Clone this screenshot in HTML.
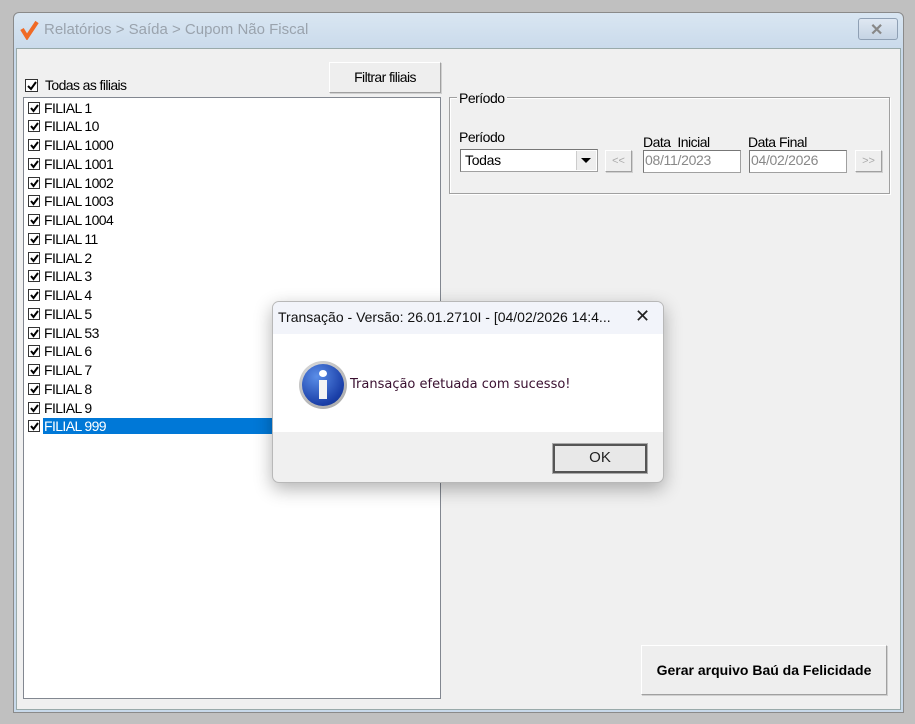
<!DOCTYPE html>
<html><head><meta charset="utf-8"><style>
*{margin:0;padding:0;box-sizing:border-box}
body{width:915px;height:724px;background:#c0c0c0;position:relative;overflow:hidden;font-family:"Liberation Sans",sans-serif;font-size:13px;color:#000}
.a{position:absolute}
.win{left:13px;top:12px;width:891px;height:701px;border:1px solid #8a8a8a;border-radius:6px 6px 0 0;background:linear-gradient(#d9e6f2,#c8d9ea 40px);}
.client{left:16px;top:48px;width:885px;height:662px;background:#f0f0f0;border:1px solid #9aa;}
.cb{position:absolute;width:12px;height:12px;border:1px solid #333;background:#fff}
.cb svg{position:absolute;left:0;top:0}
.row{position:absolute;left:4px;height:19px;width:400px}
.row .cb{left:0;top:3px}
.row span{position:absolute;left:15px;top:1px;font-size:14px;letter-spacing:-0.6px;padding:0 1px}
.btn{position:absolute;background:#eeeeee;border:1px solid #fff;border-right-color:#a0a0a0;border-bottom-color:#a0a0a0;box-shadow:1px 1px 0 #d0d0d0;text-align:center}
.inp{position:absolute;background:#fff;border:1px solid #a0a0a0;border-top-color:#777;border-left-color:#777;font-size:14px;color:#888;padding:1px 0 0 1px;letter-spacing:-0.3px}
</style></head><body>
<div class="a win"></div>
<svg class="a" style="left:20px;top:20px" width="20" height="20"><path d="M2 9 L7 17 L17 2" stroke="#f06a25" stroke-width="4" fill="none"/></svg>
<div class="a" style="left:44px;top:21px;font-size:15px;color:#9aa3ad">Relatórios &gt; Saída &gt; Cupom Não Fiscal</div>
<div class="a" style="left:858px;top:18px;width:40px;height:22px;border:1px solid #8fa0b4;border-radius:3px;background:linear-gradient(#dfe8f2,#c5d4e4)"></div>
<div class="a" style="left:870px;top:20px;font-size:16px;font-weight:bold;color:#888">✕</div>
<div class="a client"></div>
<div class="cb" style="left:25px;top:79px;width:13px;height:13px"><svg width="12" height="12"><path d="M2 6 L5 9 L10 2" stroke="#000" stroke-width="2" fill="none"/></svg></div>
<div class="a" style="left:45px;top:77px;font-size:14px;letter-spacing:-0.6px">Todas as filiais</div>
<div class="btn" style="left:329px;top:62px;width:112px;height:31px;line-height:29px;font-size:14px;letter-spacing:-0.6px">Filtrar filiais</div>
<div class="a" style="left:23px;top:97px;width:418px;height:602px;background:#fff;border:1px solid #828790">
<script>
var n=["FILIAL 1","FILIAL 10","FILIAL 1000","FILIAL 1001","FILIAL 1002","FILIAL 1003","FILIAL 1004","FILIAL 11","FILIAL 2","FILIAL 3","FILIAL 4","FILIAL 5","FILIAL 53","FILIAL 6","FILIAL 7","FILIAL 8","FILIAL 9","FILIAL 999"];
for(var i=0;i<n.length;i++){var sel=i==17;document.write('<div class="row" style="top:'+(0.5+i*18.76)+'px"><div class="cb"><svg width="11" height="11"><path d="M2 5 L4.5 8 L9 2" stroke="#000" stroke-width="2" fill="none"/></svg></div><span style="'+(sel?'background:#0078d7;color:#fff;width:230px':'')+'">'+n[i]+'</span></div>');}
</script>
</div>
<div class="a" style="left:449px;top:97px;width:441px;height:97px;border:1px solid #a0a0a0;box-shadow:inset 1px 1px 0 #fff,1px 1px 0 #fff"></div>
<div class="a" style="left:457px;top:90px;background:#f0f0f0;padding:0 2px;font-size:14px;letter-spacing:-0.5px">Período</div>
<div class="a" style="left:459px;top:129px;font-size:14px;letter-spacing:-0.5px">Período</div>
<div class="inp" style="left:460px;top:149px;width:138px;height:23px;color:#000;padding-left:4px;padding-top:2px">Todas</div>
<div class="a" style="left:576px;top:151px;width:20px;height:19px;background:#eee;border-left:1px solid #ccc"></div>
<div class="a" style="left:581px;top:158px;width:0;height:0;border-left:5px solid transparent;border-right:5px solid transparent;border-top:5px solid #000"></div>
<div class="btn" style="left:605px;top:150px;width:27px;height:22px;color:#aaa;font-size:11px;line-height:20px">&lt;&lt;</div>
<div class="a" style="left:643px;top:134px;font-size:14px;letter-spacing:-0.5px">Data&nbsp; Inicial</div>
<div class="inp" style="left:643px;top:150px;width:98px;height:23px">08/11/2023</div>
<div class="a" style="left:748px;top:134px;font-size:14px;letter-spacing:-0.5px">Data Final</div>
<div class="inp" style="left:749px;top:150px;width:98px;height:23px">04/02/2026</div>
<div class="btn" style="left:855px;top:150px;width:27px;height:22px;color:#aaa;font-size:11px;line-height:20px">&gt;&gt;</div>
<div class="btn" style="left:641px;top:645px;width:246px;height:50px;line-height:48px;font-weight:bold;font-size:14px">Gerar arquivo Baú da Felicidade</div>

<div class="a" style="left:272px;top:301px;width:392px;height:182px;border:1px solid #b8b8b8;border-radius:7px;overflow:hidden;background:#f0f0f0;box-shadow:0 6px 18px rgba(0,0,0,.3)">
<div class="a" style="left:0;top:0;width:392px;height:32px;background:#f2f4fa"></div>
<div class="a" style="left:5px;top:7px;font-size:14px;color:#111">Transação - Versão: 26.01.2710I - [04/02/2026 14:4...</div>
<div class="a" style="left:362px;top:4px;font-size:18px;color:#222">✕</div>
<div class="a" style="left:0;top:32px;width:392px;height:98px;background:#fff"></div>
<div class="a" style="left:26px;top:59px;width:48px;height:48px;border-radius:50%;background:radial-gradient(circle at 40% 35%,#eee,#999);"></div>
<div class="a" style="left:29px;top:62px;width:42px;height:42px;border-radius:50%;background:radial-gradient(circle at 35% 30%,#5b8ee8,#1a3fa8 70%,#0c2a80)"></div>
<div class="a" style="left:46px;top:68px;width:8px;height:7px;border-radius:50%;background:#fff"></div>
<div class="a" style="left:46px;top:78px;width:8px;height:19px;background:#f4f4f4"></div>
<div class="a" style="left:77px;top:75px;font-size:13px;font-family:'DejaVu Sans',sans-serif;color:#3a1030">Transação efetuada com sucesso!</div>
<div class="a" style="left:280px;top:142px;width:94px;height:29px;border:2px solid #555;background:#e8e8e8;outline:1px solid #aaa;text-align:center;line-height:24px;font-size:15px;color:#222">OK</div>
</div>
</body></html>
